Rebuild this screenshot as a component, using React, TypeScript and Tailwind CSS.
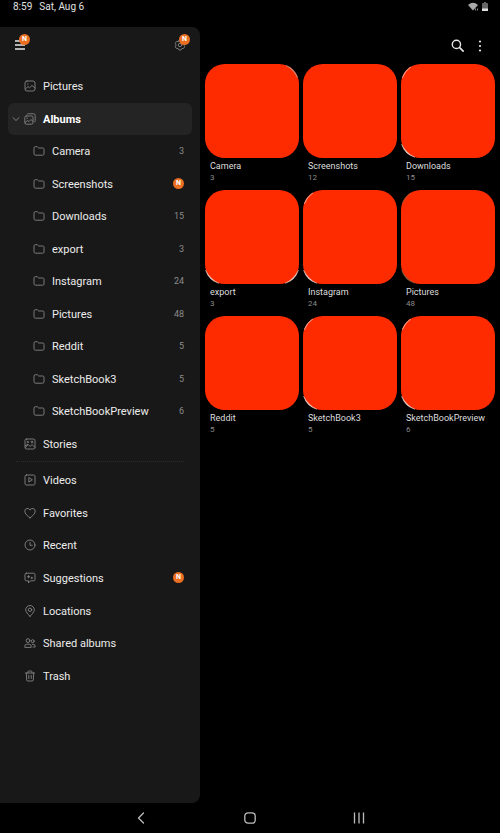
import type { ReactNode } from "react";

type Corner = "tl" | "tr" | "bl" | "br";
type Album = { name: string; count: number; isNew?: boolean; edges: Corner[]; edgeColor?: string };

const albums: Album[] = [
  { name: "Camera", count: 3, edges: ["tr"], edgeColor: "#b9a9a3" },
  { name: "Screenshots", count: 12, isNew: true, edges: [] },
  { name: "Downloads", count: 15, edges: ["tl", "bl"] },
  { name: "export", count: 3, edges: ["bl", "br"] },
  { name: "Instagram", count: 24, edges: ["tl", "bl"] },
  { name: "Pictures", count: 48, edges: ["tl", "bl"], edgeColor: "#8a6040" },
  { name: "Reddit", count: 5, edges: [] },
  { name: "SketchBook3", count: 5, edges: ["tl", "bl"] },
  { name: "SketchBookPreview", count: 6, edges: ["tl", "bl"] },
];

const edgePaths: Record<Corner, string> = {
  tl: "M1.400 14A20 20 0 0 1 10 3Q4 7 1.400 14Z",
  tr: "M82 1.500A20 20 0 0 1 93.500 14Q90 6 82 1.500Z",
  bl: "M0.600 81A20 20 0 0 0 14 94.300Q5 90 0.600 81Z",
  br: "M94.400 81A20 20 0 0 1 81 94.300Q90 90 94.400 81Z",
};

function Glyph({ children, className = "size-3" }: { children: ReactNode; className?: string }) {
  return (
    <svg
      viewBox="0 0 12 12"
      className={`shrink-0 ${className}`}
      fill="none"
      stroke="currentColor"
      strokeWidth="0.9"
      strokeLinecap="round"
      strokeLinejoin="round"
      aria-hidden="true"
    >
      {children}
    </svg>
  );
}

const PictureIcon = () => (
  <Glyph>
    <rect x="1" y="1" width="10" height="10" rx="2" />
    <path d="M1.500 9 4 6.500l1.500 1.300L8 5.500l3 2.500M3.500 4h.6" />
  </Glyph>
);
const AlbumsIcon = () => (
  <Glyph>
    <rect x="0.800" y="3" width="8.200" height="8.200" rx="1.500" />
    <path d="M3 1.200Q3.400.8 4.500.8h5Q11.200.8 11.200 2.500v5Q11.200 8.600 10.800 9M1.200 9.500 3.500 7.500 5 8.600 7 6.500l2 2M3 5.300h.5" />
  </Glyph>
);
const FolderIcon = () => (
  <Glyph>
    <path d="M1 3Q1 1.700 2.300 1.700h2L5.700 3h4Q11 3 11 4.300v4.500Q11 10.200 9.600 10.200H2.400Q1 10.200 1 8.800Z" />
  </Glyph>
);
const StoriesIcon = () => (
  <Glyph>
    <rect x="1" y="1" width="10" height="10" rx="1.500" />
    <path d="m1.500 9.500 2.700-3 2 2 1.800-2 3 3M3 3.300l1.500 1.200M3 4.700l1.500-1.400M8 3v2M7 4h2M1.500 7.500l2-1" />
  </Glyph>
);
const VideoIcon = () => (
  <Glyph>
    <rect x="1" y="1" width="10" height="10" rx="1.500" />
    <path d="M4.800 4v4L8 6Z" />
  </Glyph>
);
const HeartIcon = () => (
  <Glyph>
    <path d="M6 10.800C3.500 9 .8 6.700.8 4.200A2.700 2.700 0 0 1 6 3.100 2.700 2.700 0 0 1 11.200 4.200C11.200 6.700 8.500 9 6 10.800Z" />
  </Glyph>
);
const ClockIcon = () => (
  <Glyph>
    <circle cx="6" cy="6" r="5" />
    <path d="M6 3.300V6.300h2.200" />
  </Glyph>
);
const SuggestionIcon = () => (
  <Glyph>
    <path d="M2.300 1.200h7.400Q11 1.200 11 2.500v5Q11 8.800 9.700 8.800H6.500L4.500 10.900V8.800H2.300Q1 8.800 1 7.500v-5Q1 1.200 2.300 1.200ZM4.600 3.600v2.200M3.500 4.700h2.200M7.800 5.200v1.400M7.100 5.900h1.400" />
  </Glyph>
);
const PinIcon = () => (
  <Glyph>
    <path d="M6 11.300C4 9 1.700 7 1.700 4.800a4.300 4.300 0 0 1 8.600 0C10.300 7 8 9 6 11.300Z" />
    <circle cx="6" cy="4.800" r="1.700" />
  </Glyph>
);
const PeopleIcon = () => (
  <Glyph>
    <circle cx="4" cy="3.600" r="1.900" />
    <circle cx="8.700" cy="4.200" r="1.500" />
    <path d="M.8 10V9.200Q.8 7.200 2.800 7.200h2.400Q7.200 7.200 7.200 9.200V10ZM8.300 7.300H9.200Q11.200 7.300 11.200 9.200V10H9" />
  </Glyph>
);
const TrashIcon = () => (
  <Glyph>
    <path d="M1.500 3h9M4 3V1.800Q4 1 4.800 1h2.400Q8 1 8 1.800V3M2.300 3l.4 7Q2.800 11 3.800 11h4.400Q9.200 11 9.300 10l.4-7M4.800 5.300v3.200M7.200 5.300v3.200" />
  </Glyph>
);

function NewBadge() {
  return (
    <span className="flex size-[11px] items-center justify-center rounded-full bg-[#ea6f22] text-[7px] leading-none font-bold text-white">
      N
    </span>
  );
}

function Row({
  icon,
  label,
  end,
  nested = false,
  selected = false,
}: {
  icon: ReactNode;
  label: string;
  end?: ReactNode;
  nested?: boolean;
  selected?: boolean;
}) {
  return (
    <li className="grid">
      <button
        type="button"
        className={`flex items-center rounded-md pr-2 text-left text-[11px] leading-4 ${nested ? "pl-[25px]" : "pl-1"} ${
          selected ? "bg-[#242424] font-bold text-white" : "text-[#ececec]"
        }`}
      >
        {!nested && (
          <span className="w-3 shrink-0 text-[#858585]">
            {selected && (
              <Glyph className="size-2">
                <path strokeWidth="1.400" d="M1.500 4 6 8.300 10.500 4" />
              </Glyph>
            )}
          </span>
        )}
        <span className="text-[#858585]">{icon}</span>
        <span className="ml-[7px] grow pt-0.5">{label}</span>
        <span className="text-[9px] font-normal text-[#8b8b8b]">{end}</span>
      </button>
    </li>
  );
}

function Sidebar() {
  return (
    <aside className="w-2/5 shrink-0 rounded-r-lg bg-[#181818] px-2">
      <header className="flex h-[43px] items-start justify-between pt-3 pr-1.5 pl-[7px]">
        <button type="button" aria-label="Menu" className="relative text-[#e6e6e6]">
          <Glyph>
            <path strokeWidth="1.300" strokeLinecap="butt" d="M0 2h10M0 6h10M0 10h10" />
          </Glyph>
          <span className="absolute -top-[5px] left-1">
            <NewBadge />
          </span>
        </button>
        <button type="button" aria-label="Settings" className="relative text-[#858585]">
          <Glyph>
            <path d="M4.800 1.200Q6 .4 7.200 1.200L7.800 2.500 9.200 2.500Q10.600 3 10.700 4.400L9.900 6 10.700 7.600Q10.600 9 9.200 9.500L7.800 9.500 7.200 10.800Q6 11.600 4.800 10.800L4.200 9.500 2.800 9.500Q1.400 9 1.300 7.600L2.100 6 1.300 4.400Q1.400 3 2.800 2.500L4.200 2.500Z" />
            <circle cx="6" cy="6" r="1.700" />
          </Glyph>
          <span className="absolute -top-[5px] left-[5px]">
            <NewBadge />
          </span>
        </button>
      </header>
      <nav aria-label="Gallery">
        <ul className="grid h-[390px] auto-rows-fr">
          <Row icon={<PictureIcon />} label="Pictures" />
          <Row icon={<AlbumsIcon />} label="Albums" selected />
          {albums.map((a) => (
            <Row key={a.name} icon={<FolderIcon />} label={a.name} nested end={a.isNew ? <NewBadge /> : a.count} />
          ))}
          <Row icon={<StoriesIcon />} label="Stories" />
        </ul>
        <hr className="mx-2 mt-px mb-0.5 border-dotted border-[#2c2c2c]" />
        <ul className="grid h-[228px] auto-rows-fr">
          <Row icon={<VideoIcon />} label="Videos" />
          <Row icon={<HeartIcon />} label="Favorites" />
          <Row icon={<ClockIcon />} label="Recent" />
          <Row icon={<SuggestionIcon />} label="Suggestions" end={<NewBadge />} />
          <Row icon={<PinIcon />} label="Locations" />
          <Row icon={<PeopleIcon />} label="Shared albums" />
          <Row icon={<TrashIcon />} label="Trash" />
        </ul>
      </nav>
    </aside>
  );
}

function AlbumTile({ album }: { album: Album }) {
  return (
    <button type="button" className="block w-full text-left">
      <svg viewBox="0 0 95 95" className="block w-full" aria-hidden="true">
        <rect width="95" height="95" rx="20" fill="#ff2b00" />
        {album.edges.map((e) => (
          <path
            key={e}
            d={edgePaths[e]}
            fill={album.edgeColor ?? "#f3dfd8"}
            stroke={album.edgeColor ?? "#f3dfd8"}
            strokeWidth="0.400"
          />
        ))}
      </svg>
      <span className="mt-0.5 block pl-[5px] text-[9px] leading-3 text-[#dedede]">{album.name}</span>
      <span className="block pl-[5px] text-[8px] leading-3 text-[#8b8b8b]">{album.count}</span>
    </button>
  );
}

export default function App() {
  return (
    <div className="flex min-h-screen flex-col bg-black font-[Roboto,sans-serif] text-white">
      <div className="flex h-[27px] items-start justify-between pt-px pr-3 pl-[13px] text-[10px] leading-3 text-[#e0e0e0]">
        <div className="flex gap-[7px]">
          <span>8:59</span>
          <span>Sat, Aug 6</span>
        </div>
        <div className="flex items-center gap-[3px] pt-px">
          <svg viewBox="0 0 11 9" className="h-[9px] w-[11px]" aria-label="Wi-Fi">
            <path d="M0 3Q5 -1.500 10 3L5 8.500Z" fill="#a8a8a8" />
            <path d="M7.500 6.500v2M9.500 6.500v2" stroke="#a8a8a8" strokeWidth="0.800" />
          </svg>
          <svg viewBox="0 0 6 9" className="h-[9px] w-1.5" aria-label="Battery">
            <path d="M0 2Q0 1 1 1h1V0h2v1h1q1 0 1 1v7H0Z" fill="#666666" />
            <path d="M0 6.500h6V9H0Z" fill="#e0e0e0" />
          </svg>
        </div>
      </div>
      <div className="flex grow">
        <Sidebar />
        <main className="grow px-[5px]">
          <div className="flex h-[37px] items-center justify-end gap-2.5 pr-[9px] text-[#e6e6e6]">
            <button type="button" aria-label="Search">
              <Glyph className="size-[13px]">
                <circle cx="5" cy="5" r="3.800" strokeWidth="1.300" />
                <path strokeWidth="1.500" d="m8 8 3.200 3.200" />
              </Glyph>
            </button>
            <button type="button" aria-label="More options">
              <svg viewBox="0 0 12 12" className="size-3" fill="currentColor" aria-hidden="true">
                <circle cx="6" cy="1.500" r="1.100" />
                <circle cx="6" cy="6" r="1.100" />
                <circle cx="6" cy="10.500" r="1.100" />
              </svg>
            </button>
          </div>
          <div className="grid grid-cols-3 gap-x-1 gap-y-1.5">
            {albums.map((a) => (
              <AlbumTile key={a.name} album={a} />
            ))}
          </div>
        </main>
      </div>
      <nav aria-label="System" className="flex h-[30px] items-center justify-center gap-[97px] text-[#bdbdbd]">
        <button type="button" aria-label="Back">
          <Glyph>
            <path strokeWidth="1.300" d="M8.500 1 3.500 6l5 5" />
          </Glyph>
        </button>
        <button type="button" aria-label="Home">
          <Glyph>
            <rect x="0.800" y="0.800" width="10.400" height="10.400" rx="3.300" strokeWidth="1.300" />
          </Glyph>
        </button>
        <button type="button" aria-label="Recent apps">
          <Glyph>
            <path strokeWidth="1.300" strokeLinecap="butt" d="M1.500.5v11M6 .5v11M10.500.5v11" />
          </Glyph>
        </button>
      </nav>
    </div>
  );
}
